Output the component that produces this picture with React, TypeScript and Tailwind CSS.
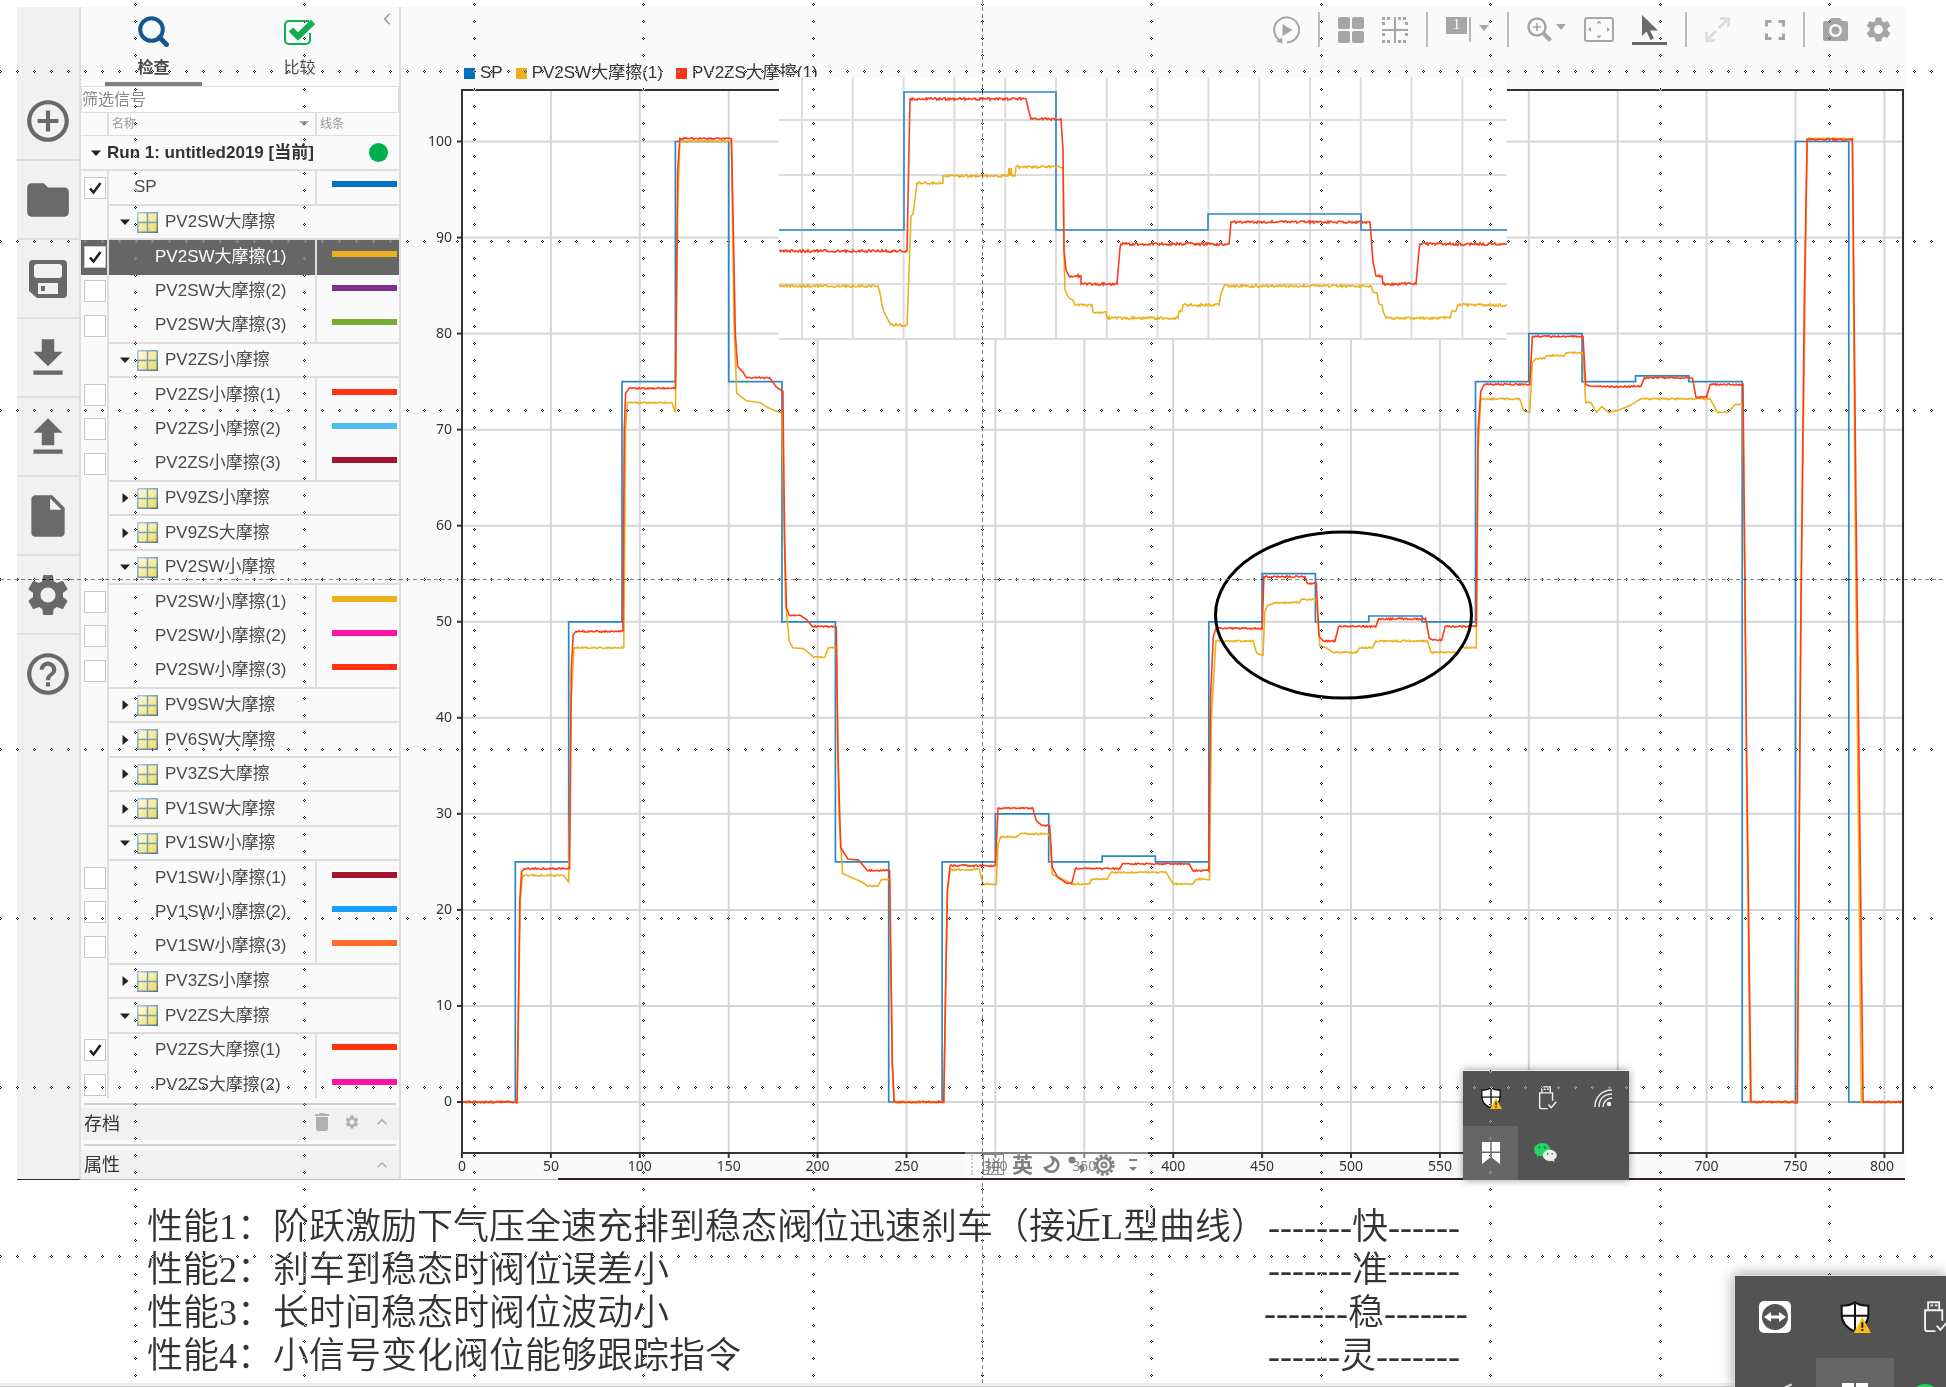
import { useState } from 'react';
import type { ReactNode } from 'react';
import {
  MdAddCircleOutline,
  MdArrowBackIosNew,
  MdFolder,
  MdHelpOutline,
  MdInsertDriveFile,
  MdKeyboardArrowUp,
  MdSettings,
} from 'react-icons/md';

type Row =
  | { kind: 'group'; name: string; open: boolean }
  | { kind: 'signal'; name: string; color: string; on?: boolean; selected?: boolean; last?: boolean; root?: boolean };

const rows: Row[] = [
  { kind: 'signal', name: 'SP', color: '#0072bd', on: true, last: true, root: true },
  { kind: 'group', name: 'PV2SW大摩擦', open: true },
  { kind: 'signal', name: 'PV2SW大摩擦(1)', color: '#edb120', on: true, selected: true },
  { kind: 'signal', name: 'PV2SW大摩擦(2)', color: '#7e2f8e' },
  { kind: 'signal', name: 'PV2SW大摩擦(3)', color: '#77ac30', last: true },
  { kind: 'group', name: 'PV2ZS小摩擦', open: true },
  { kind: 'signal', name: 'PV2ZS小摩擦(1)', color: '#ff3311' },
  { kind: 'signal', name: 'PV2ZS小摩擦(2)', color: '#4dbeee' },
  { kind: 'signal', name: 'PV2ZS小摩擦(3)', color: '#a2142f', last: true },
  { kind: 'group', name: 'PV9ZS小摩擦', open: false },
  { kind: 'group', name: 'PV9ZS大摩擦', open: false },
  { kind: 'group', name: 'PV2SW小摩擦', open: true },
  { kind: 'signal', name: 'PV2SW小摩擦(1)', color: '#edb120' },
  { kind: 'signal', name: 'PV2SW小摩擦(2)', color: '#ff13a6' },
  { kind: 'signal', name: 'PV2SW小摩擦(3)', color: '#ff3311', last: true },
  { kind: 'group', name: 'PV9SW大摩擦', open: false },
  { kind: 'group', name: 'PV6SW大摩擦', open: false },
  { kind: 'group', name: 'PV3ZS大摩擦', open: false },
  { kind: 'group', name: 'PV1SW大摩擦', open: false },
  { kind: 'group', name: 'PV1SW小摩擦', open: true },
  { kind: 'signal', name: 'PV1SW小摩擦(1)', color: '#a2142f' },
  { kind: 'signal', name: 'PV1SW小摩擦(2)', color: '#1a9fff' },
  { kind: 'signal', name: 'PV1SW小摩擦(3)', color: '#ff6929', last: true },
  { kind: 'group', name: 'PV3ZS小摩擦', open: false },
  { kind: 'group', name: 'PV2ZS大摩擦', open: true },
  { kind: 'signal', name: 'PV2ZS大摩擦(1)', color: '#ff3311', on: true },
  { kind: 'signal', name: 'PV2ZS大摩擦(2)', color: '#ff13a6' },
];

type Point = [number, number];

// setpoint and measured positions, [seconds, percent]
const spSteps: Point[] = [
  [0, 0], [30, 25], [60, 50], [90, 75], [120, 100], [150, 75], [180, 50], [210, 25], [240, 0], [270, 25],
  [300, 30], [330, 25], [360, 25.6], [390, 25], [420, 50], [450, 55], [480, 50], [510, 50.6], [540, 50],
  [570, 75], [600, 80], [630, 75], [660, 75.6], [690, 75], [720, 0], [750, 100], [780, 0], [810, 0],
];

const zs: Point[] = [
  [0, 0], [31, 0], [32.5, 21], [33.5, 24], [35, 24.3], [60.5, 24.3], [61.5, 45], [62.5, 48.6], [64, 49], [90.5, 49],
  [91.3, 70], [92, 73.8], [94, 74.3], [120, 74.3], [121.3, 97], [122.5, 100.3], [151.5, 100.3], [152.5, 92],
  [153.7, 80], [155, 76.6], [158, 76], [160, 75.4], [173, 75.4], [177, 74.4], [180.5, 74], [181.5, 58], [182.5, 51.4],
  [184, 50.7], [190, 50.7], [194, 50.2], [197, 49.5], [210.5, 49.5], [211.5, 36], [213, 26.5], [217, 25.3], [223, 25.2],
  [228, 24.1], [240.5, 24.1], [242, 4], [243, 0], [271, 0], [272, 12], [273, 22], [274.5, 24.6], [300, 24.6],
  [301.5, 30.6], [321, 30.6], [323, 29.3], [326, 28.8], [330.5, 28.8], [332, 24.4], [335, 23.4], [340, 22.8],
  [343, 22.8], [345, 24.3], [370, 24.3], [371.5, 24.8], [409, 24.8], [411, 24.1], [420, 24.1], [421, 42], [422.5, 48.4],
  [424, 49.3], [450, 49.3], [451, 54.7], [474, 54.7], [475.5, 54], [480.5, 54], [482, 48.5], [484.5, 48], [491, 48],
  [493, 49.5], [514, 49.5], [515.5, 50.3], [542, 50.3], [544, 48.3], [546, 48.1], [551, 48.1], [553, 49.5],
  [570.5, 49.5], [571.5, 70], [573, 74], [575, 74.7], [600.5, 74.7], [602, 79.7], [630.5, 79.7], [632, 74.7],
  [635, 74.5], [663, 74.5], [665, 75.4], [692, 75.4], [694, 73.4], [700, 73.4], [702, 74.7], [720.5, 74.7],
  [722.5, 36], [725, 0], [751, 0], [753, 50], [755, 84], [756.5, 100.2], [782, 100.2], [784, 62], [788, 0], [810, 0],
];

const sw: Point[] = [
  [0, 0], [31, 0], [32.8, 21], [34, 23.6], [57, 23.6], [60, 22.9], [61.5, 42], [63, 47.3], [91, 47.3], [92, 70],
  [93, 72.8], [118, 72.8], [120, 71.8], [121.3, 93], [122.5, 100], [151.5, 100], [153, 81], [154.5, 73.8],
  [160, 73], [168, 72.8], [172, 72.3], [176, 72], [180, 71.7], [182, 52], [184, 48], [186, 47.3], [192, 47.2],
  [198, 46.3], [204, 46.3], [206, 47.3], [210.5, 47.3], [212, 30], [214, 23.8], [220, 23.3], [225, 22.9],
  [228, 22.5], [234, 22.5], [236, 23.2], [240.5, 23.2], [242, 4], [243, 0], [271, 0], [273, 22], [274.5, 24.2],
  [291, 24.2], [293, 22.7], [300.5, 22.7], [301.5, 26.8], [303, 27.6], [312, 27.6], [314, 27.9], [330.5, 27.9],
  [332, 23.7], [338, 23.2], [343, 22.7], [353, 22.7], [354, 23.2], [363, 23.2], [365, 23.9], [396, 23.9],
  [400, 22.7], [411, 22.7], [413, 23.2], [420.5, 23.2], [421.5, 40], [424, 48], [445, 48], [447, 46.7], [450.5, 46.5],
  [451.5, 51], [453, 51.7], [458, 52], [471, 52], [472, 52.3], [480.5, 52.3], [482.5, 47.5], [486, 47.3],
  [490, 46.8], [503, 46.8], [505, 47.3], [512, 47.3], [514, 48], [543, 48], [545, 46.8], [560, 46.8], [562, 47.3],
  [570.5, 47.3], [571.5, 68], [573, 73.2], [595, 73.2], [597, 72], [600.5, 71.8], [602, 77], [604, 77.4],
  [609, 77.4], [610, 77.7], [620, 77.7], [621, 78], [630.5, 78], [632, 72.8], [635, 72.8], [638, 71.8],
  [641, 72.4], [645, 71.8], [650, 72], [657, 72.5], [663, 73.2], [702, 73.2], [706, 71.8], [712, 71.8], [716, 72.6],
  [720.5, 72.6], [722.5, 34], [724.5, 0], [751, 0], [753, 50], [756.5, 100.3], [782, 100.3], [783.5, 62], [787, 0],
  [810, 0],
];

// magnified view, in drawing units
const zoomSp: Point[] = [
  [779, 230], [904, 230], [904, 92], [1056, 92], [1056, 230], [1208, 230], [1208, 214], [1361, 214], [1361, 230], [1507, 230],
];
const zoomZs: Point[] = [
  [779, 251], [907, 251], [910, 99], [1026, 99], [1029, 112], [1031, 119], [1061, 119], [1063, 150], [1064, 250],
  [1066, 270], [1069, 276], [1081, 276], [1081, 284], [1117, 284], [1120, 248], [1121, 244], [1229, 244], [1231, 222],
  [1370, 222], [1373, 262], [1376, 276], [1382, 276], [1383, 284], [1416, 284], [1419, 250], [1420, 244], [1507, 244],
];
const zoomSw: Point[] = [
  [779, 286], [878, 286], [880, 293], [882, 305], [884, 312], [887, 318], [891, 325], [907, 325], [908, 300],
  [911, 216], [913, 214], [917, 183], [943, 183], [943, 176], [1008, 176], [1009, 168], [1010, 176], [1011, 168],
  [1012, 176], [1015, 176], [1016, 167], [1063, 167], [1064, 250], [1065, 290], [1069, 298], [1073, 300], [1075, 305],
  [1092, 305], [1093, 312], [1106, 312], [1107, 318], [1178, 318], [1179, 311], [1182, 311], [1183, 305], [1219, 305],
  [1221, 294], [1224, 286], [1371, 286], [1373, 292], [1377, 293], [1379, 304], [1382, 305], [1383, 311], [1386, 318],
  [1450, 318], [1452, 311], [1456, 311], [1458, 305], [1507, 305],
];

const sx = (t: number) => 462 + t * 1.778;
const sy = (v: number) => 1101 - v * 9.605;

// adds sensor ripple to the flat stretches
function trace(points: Point[], ripple: number) {
  let seed = 7;
  const out = [`M${points[0][0]} ${points[0][1]}`];
  for (let i = 1; i < points.length; i++) {
    const [x0, y0] = points[i - 1];
    const [x1, y1] = points[i];
    if (ripple > 0 && Math.abs(y1 - y0) < 0.01) {
      for (let x = x0 + 1; x < x1; x += 1) {
        seed = (seed * 16807) % 2147483647;
        out.push(`L${x.toFixed(1)} ${(y0 + ((seed % 200) / 100 - 1) * ripple).toFixed(1)}`);
      }
    }
    out.push(`L${x1.toFixed(1)} ${y1.toFixed(1)}`);
  }
  return out.join('');
}

const scale = (points: Point[]): Point[] => points.map(([t, v]) => [sx(t), sy(v)]);

const spPath = spSteps
  .map(([t, v], i) => (i === 0 ? `M${sx(t)} ${sy(v)}` : `H${sx(t).toFixed(1)}V${sy(v).toFixed(1)}`))
  .join('');

const range = (n: number) => Array.from({ length: n }, (_, i) => i);

function Chart() {
  return (
    <svg viewBox="401 88 1504 1091" className="block w-full font-['Noto_Sans',sans-serif] text-sm" fill="none">
      <rect x="462" y="89" width="1441" height="1063" fill="#fff" />
      <g stroke="#d6d6d6" strokeWidth="2">
        {range(16).map((i) => (
          <path key={i} d={`M${sx((i + 1) * 50)} 90V1152`} />
        ))}
        {range(11).map((i) => (
          <path key={i} d={`M462 ${sy(i * 10)}H1903`} />
        ))}
      </g>
      <path d={spPath} stroke="#2a87c8" strokeWidth="1.700" />
      <path d={trace(scale(sw), 0.8)} stroke="#edb120" strokeWidth="1.600" />
      <path d={trace(scale(zs), 0.8)} stroke="#ff3c14" strokeWidth="1.600" />
      <rect x="462" y="89" width="1441" height="1063" stroke="#333" strokeWidth="2" />
      <g stroke="#333" strokeWidth="2">
        {range(17).map((i) => (
          <path key={i} d={`M${sx(i * 50)} 1152v5`} />
        ))}
        {range(11).map((i) => (
          <path key={i} d={`M457 ${sy(i * 10)}h5`} />
        ))}
      </g>
      <g fill="#333">
        {range(17).map((i) => (
          <text key={i} x={i === 16 ? 1882 : sx(i * 50)} y="1170" textAnchor="middle">
            {i * 50}
          </text>
        ))}
        {range(11).map((i) => (
          <text key={i} x="452" y={sy(i * 10) + 4} textAnchor="end">
            {i * 10}
          </text>
        ))}
      </g>
      <ellipse cx="1343.500" cy="614" rx="128" ry="83" stroke="#000" strokeWidth="3" />
      <path d="M401 1178.500H558" stroke="#bbb" />
      <path d="M558 1178H1905" stroke="#3a2020" strokeWidth="2" />
    </svg>
  );
}

function ZoomedChart() {
  return (
    <svg viewBox="779 77 728 263" className="block w-full" fill="none">
      <rect x="779" y="77" width="728" height="263" fill="#fff" />
      <g stroke="#dcdcdc" strokeWidth="2">
        {range(14).map((i) => (
          <path key={i} d={`M${802 + i * 50.8} 77V340`} />
        ))}
        {[120, 175, 230, 284, 339].map((y) => (
          <path key={y} d={`M779 ${y}H1507`} />
        ))}
      </g>
      <path d={trace(zoomSp, 0)} stroke="#2a87c8" strokeWidth="1.600" />
      <path d={trace(zoomSw, 1.3)} stroke="#edb120" strokeWidth="1.600" />
      <path d={trace(zoomZs, 1.3)} stroke="#f4401c" strokeWidth="1.600" />
    </svg>
  );
}

// alignment guides laid over the whole sheet
function Guides() {
  const dots: string[] = [];
  const dot = (x: number, y: number) => {
    const px = Math.round(x);
    const py = Math.round(y);
    dots.push(`M${px} ${py - 1}h1v1h-1zM${px} ${py + 1}h1v1h-1zM${px - 1} ${py}h1v1h-1zM${px + 1} ${py}h1v1h-1z`);
  };
  const rowsY = [71, 241, 410, 579, 749, 918, 1087, 1256];
  const colsX = range(11).map((i) => 135 + i * 169.4);
  rowsY.forEach((y) => range(115).forEach((i) => dot(i * 16.94, y)));
  colsX.forEach((x) =>
    range(82).forEach((i) => {
      const y = 4 + i * 16.93;
      if (!rowsY.some((r) => Math.abs(r - y) < 3)) dot(x, y);
    }),
  );
  return (
    <svg className="pointer-events-none absolute inset-0 h-full w-full mix-blend-difference" fill="#fff">
      <path d={dots.join('')} shapeRendering="crispEdges" />
      <path d="M982.500 0V1383M0 579.500H1946" stroke="#777" strokeDasharray="4 3" />
    </svg>
  );
}

function SaveIcon() {
  return (
    <svg viewBox="0 0 38 38" className="size-[38px]">
      <path
        fill="currentColor"
        fillRule="evenodd"
        d="M4 0h30a4 4 0 0 1 4 4v30a4 4 0 0 1-4 4H8l-8-7V4a4 4 0 0 1 4-4zm4 4a3 3 0 0 0-3 3v8a3 3 0 0 0 3 3h22a3 3 0 0 0 3-3V7a3 3 0 0 0-3-3zm1 19v11h20V23zm3 3h4v5h-4z"
      />
    </svg>
  );
}

function ImportIcon() {
  return (
    <svg viewBox="0 0 24 24" className="size-[50px]" fill="currentColor">
      <path d="M19 9h-4V3H9v6H5l7 7 7-7zM5 18v2h14v-2H5z" />
    </svg>
  );
}

function ExportIcon() {
  return (
    <svg viewBox="0 0 24 24" className="size-[50px]" fill="currentColor">
      <path d="M9 16h6v-6h4l-7-7-7 7h4zm-4 2h14v2H5z" />
    </svg>
  );
}

const railItems: { label: string; icon: ReactNode }[] = [
  { label: '新建', icon: <MdAddCircleOutline className="size-[50px]" /> },
  { label: '打开', icon: <MdFolder className="size-[50px]" /> },
  { label: '保存', icon: <SaveIcon /> },
  { label: '导入', icon: <ImportIcon /> },
  { label: '导出', icon: <ExportIcon /> },
  { label: '报告', icon: <MdInsertDriveFile className="size-[50px]" /> },
  { label: '预设', icon: <MdSettings className="size-[50px]" /> },
  { label: '帮助', icon: <MdHelpOutline className="size-[50px]" /> },
];

function Rail() {
  return (
    <nav className="w-16 shrink-0 border-r-2 border-b border-r-[#dedede] border-b-[#3a2020] bg-[#f1f1f1] pt-[75px] text-[#696969]">
      <div className="flex h-[630px] flex-col">
        {railItems.map((item) => (
          <button
            key={item.label}
            aria-label={item.label}
            className="flex flex-1 items-center justify-center border-b-2 border-[#dedede] last:border-b-0"
          >
            {item.icon}
          </button>
        ))}
      </div>
    </nav>
  );
}

function GroupIcon() {
  return (
    <svg viewBox="0 0 21 21" className="size-[21px]">
      <defs>
        <linearGradient id="pane" x1="0" y1="0" x2="1" y2="1">
          <stop offset="0" stopColor="#fdfce0" />
          <stop offset="1" stopColor="#ecdc62" />
        </linearGradient>
        <linearGradient id="frame" x1="0" y1="0" x2="1" y2="1">
          <stop offset="0" stopColor="#a9cdea" />
          <stop offset="1" stopColor="#4f6f86" />
        </linearGradient>
      </defs>
      <rect width="21" height="21" fill="url(#frame)" />
      <rect x="1.500" y="1.500" width="18" height="18" fill="url(#pane)" />
      <path d="M10.500 1v19M1 10.500h19" stroke="#7f9fae" strokeWidth="1.500" />
    </svg>
  );
}

function Caret({ open }: { open: boolean }) {
  return (
    <svg viewBox="0 0 10 10" className="size-[10px]" fill="#222">
      {open ? <path d="M0 2.500h10L5 8z" /> : <path d="M2.500 0L8.500 5l-6 5z" />}
    </svg>
  );
}

function SignalRow({ row, index }: { row: Row; index: number }) {
  const height = index % 2 ? 'h-[34px]' : 'h-[35px]';
  if (row.kind === 'group') {
    return (
      <tr className={height}>
        <td className="border-r-2 border-[#dedede]" />
        <td colSpan={2} className="border-b-2 border-[#dedede]">
          <div className="flex items-center pl-[11px]">
            <button aria-label={row.name} className="mr-[7px]">
              <Caret open={row.open} />
            </button>
            <GroupIcon />
            <span className="pl-[7px]">{row.name}</span>
          </div>
        </td>
      </tr>
    );
  }
  const id = `signal-${index}`;
  return (
    <tr className={`${height} ${row.selected ? 'bg-[#666] text-white' : ''}`}>
      <td className="border-r-2 border-[#dedede] pb-[2px]">
        <div className="relative ml-[3px] size-[22px]">
          <input
            id={id}
            type="checkbox"
            defaultChecked={row.on}
            className="peer block size-[22px] appearance-none border border-[#c8c8c8] bg-white"
          />
          <svg
            viewBox="0 0 22 22"
            className="pointer-events-none absolute inset-0 hidden peer-checked:block"
            fill="none"
            stroke="#222"
          >
            <path d="M6 11.500l3.500 4L16.500 6" strokeWidth="2.600" />
          </svg>
        </div>
      </td>
      <td className={`border-r-2 border-[#dedede] pb-[2px] ${row.last ? 'border-b-2' : ''}`}>
        <label htmlFor={id} className={row.root ? 'pl-[25px]' : 'pl-[46px]'}>
          {row.name}
        </label>
      </td>
      <td className={`border-[#dedede] ${row.last ? 'border-b-2' : ''}`}>
        <div className="mb-[8px] ml-[15px] h-[6px] w-[65px]" style={{ background: row.color }} />
      </td>
    </tr>
  );
}

function Sidebar() {
  const [tab, setTab] = useState('inspect');
  return (
    <aside className="flex w-[320px] shrink-0 flex-col border-r-2 border-b border-r-[#dedede] border-b-[#bbb] bg-[#fafafa] text-[17px] text-[#4a4a4a]">
      <div className="relative flex h-[79px] pl-[24px] text-base">
        <button
          onClick={() => setTab('inspect')}
          className={`flex w-[97px] flex-col items-center border-b-4 pt-[9px] ${tab === 'inspect' ? 'border-[#808080] font-bold' : 'border-transparent'}`}
        >
          <svg viewBox="0 0 31 31" className="size-[31px]" fill="none" stroke="#14588f">
            <circle cx="13.500" cy="13.500" r="11.300" strokeWidth="4" />
            <path d="M21.500 21.500l7 7" strokeWidth="5" strokeLinecap="round" />
          </svg>
          <span className="pt-[9px]">检查</span>
        </button>
        <button
          onClick={() => setTab('compare')}
          className={`ml-[49px] flex w-[97px] flex-col items-center border-b-4 pt-[9px] ${tab === 'compare' ? 'border-[#808080] font-bold' : 'border-transparent'}`}
        >
          <svg viewBox="0 0 31 31" className="size-[31px]" fill="none" stroke="#0bb14f">
            <path d="M25 5H5a4 4 0 0 0-4 4v15a4 4 0 0 0 4 4h17a4 4 0 0 0 4-4v-7" strokeWidth="2" />
            <path d="M7 13.500l7 7L29 6" strokeWidth="6" />
          </svg>
          <span className="pt-[9px]">比较</span>
        </button>
        <button aria-label="收起" className="absolute top-[5px] right-[5px] text-[#999]">
          <MdArrowBackIosNew className="size-[14px]" />
        </button>
      </div>
      <input
        aria-label="筛选信号"
        placeholder="筛选信号"
        className="h-[27px] border border-[#dedede] bg-white text-base placeholder:text-[#888]"
      />
      <div className="h-[985px] overflow-hidden">
        <table className="w-full table-fixed border-separate border-spacing-0 text-left leading-5">
          <colgroup>
            <col className="w-[28px]" />
            <col className="w-[208px]" />
            <col />
          </colgroup>
          <thead className="text-xs text-[#999]">
            <tr className="h-[23px]">
              <th className="border-r-2 border-b border-[#dedede]" />
              <th className="border-r-2 border-b border-[#dedede] pr-[6px] pl-[3px] font-normal">
                <span className="flex items-center justify-between">
                  名称
                  <svg viewBox="0 0 10 10" className="size-[10px]" fill="#aaa">
                    <path d="M0 2h10L5 7z" />
                  </svg>
                </span>
              </th>
              <th className="border-b border-[#dedede] pl-[3px] font-normal">线条</th>
            </tr>
          </thead>
          <tbody>
            <tr className="h-[35px]">
              <th colSpan={3} className="border-b-2 border-[#dedede]">
                <div className="flex items-center pl-[10px]">
                  <Caret open />
                  <span className="pl-[6px] text-[#333]">Run 1: untitled2019 [当前]</span>
                  <span className="mr-[11px] ml-auto size-[19px] rounded-full bg-[#00b04f]" />
                </div>
              </th>
            </tr>
            {rows.map((row, i) => (
              <SignalRow key={row.name} row={row} index={i} />
            ))}
          </tbody>
        </table>
      </div>
      <div className="mx-[3px] mt-[5px] border-t-2 border-[#cfcfcf]" />
      <div className="mt-[3px] flex h-[32px] items-center bg-[#f1f1f1] pr-[7px] pl-[3px] text-lg text-[#333]">
        存档
        <div className="ml-auto flex items-center gap-[12px] pb-[4px] text-[#b0b0b0]">
          <button aria-label="删除">
            <svg viewBox="0 0 14 18" className="h-[18px] w-[14px]" fill="currentColor">
              <path d="M0 1h4l1-1h4l1 1h4v2H0zM1 4h12v12a2 2 0 0 1-2 2H3a2 2 0 0 1-2-2z" />
            </svg>
          </button>
          <button aria-label="存档设置" className="ml-[3px]">
            <MdSettings className="size-4" />
          </button>
          <button aria-label="展开存档">
            <MdKeyboardArrowUp className="size-[20px]" />
          </button>
        </div>
      </div>
      <div className="mx-[3px] mt-[4px] border-t-2 border-[#cfcfcf]" />
      <div className="mt-[4px] flex flex-1 items-center justify-between bg-[#f1f1f1] pr-[7px] pl-[3px] text-lg text-[#333]">
        属性
        <button aria-label="展开属性" className="text-[#b0b0b0]">
          <MdKeyboardArrowUp className="size-[20px]" />
        </button>
      </div>
    </aside>
  );
}

function Separator() {
  return <div className="h-[35px] w-[2px] bg-[#bbb]" />;
}

function Toolbar() {
  return (
    <div className="flex h-[46px] items-center justify-end gap-[18px] pr-[14px] pb-[1px] text-[#a6a6a6]">
      <button aria-label="播放">
        <svg viewBox="0 0 28 28" className="size-[28px]" fill="none" stroke="currentColor" strokeWidth="2">
          <path d="M8 24.500A12.500 12.500 0 1 1 15 26.400" />
          <path d="M10.500 8v12l10-6zM4 25.500l6.500 2-.5-6z" fill="currentColor" stroke="none" />
        </svg>
      </button>
      <Separator />
      <button aria-label="布局">
        <svg viewBox="0 0 26 26" className="size-[26px]" fill="currentColor">
          <rect width="12" height="12" rx="2" />
          <rect x="14" width="12" height="12" rx="2" />
          <rect y="14" width="12" height="12" rx="2" />
          <rect x="14" y="14" width="12" height="12" rx="2" />
        </svg>
      </button>
      <button aria-label="网格">
        <svg viewBox="0 0 26 26" className="size-[26px]" fill="none" stroke="currentColor">
          <path d="M13 0v26M0 13h26" strokeWidth="2" />
          <path d="M0 1.500h10M16 1.500h10M0 24.500h10M16 24.500h10" strokeWidth="3" strokeDasharray="3 2" />
          <path d="M1.500 5v5M1.500 16v5M24.500 5v5M24.500 16v5" strokeWidth="3" strokeDasharray="3 2" />
        </svg>
      </button>
      <Separator />
      <button aria-label="子图" className="flex h-[26px] items-start gap-[8px]">
        <span className="flex">
          <span className="flex h-[17px] w-[21px] items-center justify-center bg-[#a6a6a6] font-['Liberation_Serif',serif] text-sm text-white">
            1
          </span>
          <span className="ml-[2px] h-[25px] w-[2px] bg-[#b4b4b4]" />
        </span>
        <svg viewBox="0 0 10 10" className="mt-[6px] size-[10px]" fill="currentColor">
          <path d="M0 2h10L5 8z" />
        </svg>
      </button>
      <Separator />
      <button aria-label="缩放" className="flex items-center gap-1">
        <svg viewBox="0 0 25 25" className="size-[25px]" fill="none" stroke="currentColor">
          <circle cx="10" cy="10" r="8.500" strokeWidth="2.500" />
          <path d="M16 16l7.500 7.500" strokeWidth="4" />
          <path d="M10 6v8M6 10h8" strokeWidth="1.600" />
        </svg>
        <svg viewBox="0 0 10 10" className="mb-[5px] size-[10px]" fill="currentColor">
          <path d="M0 2h10L5 8z" />
        </svg>
      </button>
      <button aria-label="适应视图">
        <svg viewBox="0 0 30 25" className="h-[25px] w-[30px]" fill="none" stroke="currentColor" strokeWidth="2">
          <rect x="1" y="1" width="28" height="23" rx="2" />
          <path d="M15 3.500l2.500 3h-5zM15 21.500l2.500-3h-5zM4 12.500l3-2.500v5zM26 12.500l-3-2.500v5z" fill="currentColor" stroke="none" />
        </svg>
      </button>
      <button aria-label="选择" className="flex w-[35px] flex-col items-center border-b-[3px] border-[#6a6a6a] pb-[2px]">
        <svg viewBox="0 0 16 25" className="h-[25px] w-[16px]" fill="#6a6a6a">
          <path d="M0 0v21l4.500-4.500L8.500 25l3.500-1.500-4-8H16z" />
        </svg>
      </button>
      <Separator />
      <button aria-label="展开" className="mr-[17px] text-[#dedede]">
        <svg viewBox="0 0 25 25" className="size-[25px]" fill="none" stroke="currentColor" strokeWidth="3">
          <path d="M15 1.500h8.500V10M23 2l-9 9M1.500 15v8.500H10M2 23l9-9" />
        </svg>
      </button>
      <button aria-label="全屏">
        <svg viewBox="0 0 20 20" className="size-[20px]" fill="none" stroke="currentColor" strokeWidth="3">
          <path d="M1.500 6.500v-5h5M13.500 1.500h5v5M18.500 13.500v5h-5M6.500 18.500h-5v-5" />
        </svg>
      </button>
      <Separator />
      <button aria-label="截图">
        <svg viewBox="0 0 25 23" className="h-[23px] w-[25px]" fill="currentColor">
          <path
            fillRule="evenodd"
            d="M8 0h9l2 3h4a2 2 0 0 1 2 2v16a2 2 0 0 1-2 2H2a2 2 0 0 1-2-2V5a2 2 0 0 1 2-2h4zm4.500 6a6.500 6.500 0 1 0 0 13 6.500 6.500 0 0 0 0-13zm0 2.500a4 4 0 1 1 0 8 4 4 0 0 1 0-8z"
          />
        </svg>
      </button>
      <button aria-label="设置">
        <svg viewBox="2 2 20 20" className="size-[25px]" fill="currentColor">
          <path d="M19.140 12.940c.04-.3.06-.61.06-.94 0-.32-.02-.64-.07-.94l2.030-1.580c.18-.14.23-.41.12-.61l-1.920-3.320c-.12-.22-.37-.29-.59-.22l-2.390.96c-.5-.38-1.030-.7-1.620-.94l-.36-2.540c-.04-.24-.24-.41-.48-.41h-3.840c-.24 0-.43.17-.47.41l-.36 2.540c-.59.24-1.130.57-1.620.94l-2.390-.96c-.22-.08-.47 0-.59.22L2.740 8.870c-.12.21-.08.47.12.61l2.030 1.580c-.05.3-.09.63-.09.94s.02.64.07.94l-2.030 1.580c-.18.14-.23.41-.12.61l1.920 3.320c.12.22.37.29.59.22l2.390-.96c.5.38 1.030.7 1.620.94l.36 2.540c.05.24.24.41.48.41h3.840c.24 0 .44-.17.47-.41l.36-2.540c.59-.24 1.130-.56 1.620-.94l2.390.96c.22.08.47 0 .59-.22l1.920-3.320c.12-.22.07-.47-.12-.61l-2.010-1.580zM12 15.600c-1.980 0-3.600-1.620-3.600-3.600s1.620-3.600 3.600-3.600 3.600 1.620 3.600 3.600-1.620 3.600-3.600 3.600z" />
        </svg>
      </button>
    </div>
  );
}

function ShieldIcon({ className }: { className: string }) {
  return (
    <svg viewBox="0 0 24 24" className={className}>
      <path d="M12 1c3 2 6 2.500 10 2.500V10c0 6-4 10.500-10 13C6 20.500 2 16 2 10V3.500C6 3.500 9 3 12 1z" fill="#fff" stroke="#111" strokeWidth="1.500" />
      <path d="M12 2v20M2 11h20" stroke="#111" strokeWidth="1.500" />
      <path d="M17.500 12L24 24H11z" fill="#fbbd14" />
      <path d="M17.500 16v4M17.500 21v1.500" stroke="#222" strokeWidth="1.500" />
    </svg>
  );
}

function UsbIcon({ className }: { className: string }) {
  return (
    <svg viewBox="0 0 20 26" className={className} fill="none" stroke="#f2f2f2" strokeWidth="1.500">
      <path d="M4 7V1h9v6M6 3.500h2M9.500 3.500h2" />
      <path d="M10 24.500H3.500a2 2 0 0 1-2-2V7.500h14V16M11 20l3 3.500 5.500-6.500" />
    </svg>
  );
}

function RibbonIcon({ className }: { className: string }) {
  return (
    <svg viewBox="0 0 18 22" className={className} fill="#fff">
      <path d="M0 0h8.300v9.500H0zM9.700 0H18v9.500H9.700zM0 11h8.300v4.500L0 22zM9.700 11H18v11l-8.300-6.500z" />
    </svg>
  );
}

function WeChatIcon({ className }: { className: string }) {
  return (
    <svg viewBox="0 0 24 20" className={className}>
      <path d="M8.500 0C4 0 0 3 0 7c0 2.300 1.200 4.200 3.200 5.500L2.500 15l3-1.500c1 .3 2 .5 3 .5 4.700 0 8.500-3 8.500-7s-3.800-7-8.500-7z" fill="#1fd663" />
      <path d="M16.500 7c-4 0-7.200 2.600-7.200 6s3.200 6 7.200 6c.9 0 1.700-.1 2.500-.4l2.500 1.400-.6-2.400c1.800-1.100 3-2.700 3-4.600 0-3.400-3.400-6-7.400-6z" fill="#eee" />
      <path d="M5.700 3.800a1 1 0 1 0 .01 0M11.300 3.800a1 1 0 1 0 .01 0M14.200 10.500a.8.8 0 1 0 .01 0M19 10.500a.8.8 0 1 0 .01 0" fill="#176b3b" />
    </svg>
  );
}

function TrayPopup() {
  return (
    <div className="absolute right-[276px] bottom-0 grid h-[110px] w-[166px] grid-cols-3 grid-rows-2 border-t border-[#eee] bg-[#535353] shadow-[0_0_8px_rgba(0,0,0,0.4)]">
      <div className="grid place-items-center">
        <ShieldIcon className="size-[22px]" />
      </div>
      <div className="grid place-items-center pl-[3px]">
        <UsbIcon className="h-[24px] w-[19px]" />
      </div>
      <div className="grid place-items-center pl-[3px]">
        <svg viewBox="0 0 18 18" className="size-[18px]" fill="none" stroke="#e8e8e8" strokeWidth="1.500">
          <path d="M1 18C1 8 8 1 18 1M5 18C5 10 10 5 18 5M9 18c0-5 4-9 9-9" />
          <circle cx="15" cy="15" r="1.500" fill="#fff" />
        </svg>
      </div>
      <div className="grid place-items-center bg-[#666]">
        <RibbonIcon className="h-[22px] w-[18px]" />
      </div>
      <div className="grid place-items-center">
        <WeChatIcon className="h-[19px] w-[23px]" />
      </div>
    </div>
  );
}

function CornerPopup() {
  return (
    <div className="absolute right-0 bottom-0 flex h-[112px] w-[212px] flex-col overflow-hidden border-t border-l border-[#ddd] bg-[#535353] shadow-[0_0_14px_rgba(0,0,0,0.4)]">
      <div className="flex h-[82px] shrink-0 items-center">
        <div className="grid w-[80px] shrink-0 place-items-center">
          <svg viewBox="0 0 32 32" className="size-[32px]">
            <rect width="32" height="32" rx="5" fill="#fff" />
            <circle cx="16" cy="16" r="13" fill="#535353" />
            <path d="M5 16l7-5v3.500h8V11l7 5-7 5v-3.500h-8V21z" fill="#fff" />
          </svg>
        </div>
        <div className="grid w-[80px] shrink-0 place-items-center">
          <ShieldIcon className="size-[32px]" />
        </div>
        <div className="grid w-[80px] shrink-0 place-items-center">
          <UsbIcon className="h-[32px] w-[25px]" />
        </div>
      </div>
      <div className="flex h-[82px] shrink-0">
        <div className="flex w-[81px] shrink-0 items-start justify-center pt-[27px] pl-6">
          <div className="h-[2px] w-[8px] rotate-[-25deg] bg-[#ddd]" />
        </div>
        <div className="flex w-[78px] shrink-0 justify-center bg-[#666] pt-[25px]">
          <RibbonIcon className="h-[32px] w-[26px] shrink-0" />
        </div>
        <div className="flex w-[72px] shrink-0 justify-center pt-[26px]">
          <WeChatIcon className="h-[28px] w-[34px] shrink-0" />
        </div>
      </div>
    </div>
  );
}

function ImeBar() {
  return (
    <div className="absolute bottom-[2px] left-[564px] flex h-[27px] w-[183px] items-center bg-white/40 pl-[6px] text-[#808080]">
      <span className="h-[20px] border-l-2 border-dotted border-[#ccc]" />
      <span className="ml-[10px] grid size-[21px] place-items-center border border-[#888] text-base">拼</span>
      <span className="ml-[8px] text-[21px] leading-6 font-bold">英</span>
      <svg viewBox="0 0 18 18" className="ml-[9px] size-[18px]" fill="none" stroke="currentColor" strokeWidth="2.500">
        <path d="M10 1.500c3 4 1 8-7 10.500 3 5 10 5 12.500 0 2-4 0-9-5.500-10.500z" />
      </svg>
      <svg viewBox="0 0 18 18" className="ml-[8px] size-[18px]" fill="currentColor">
        <circle cx="4" cy="4" r="3.500" />
        <path d="M12 9a3 3 0 0 1 4 4c0 2-2 4-4 4l1-3a3 3 0 0 1-1-5z" />
      </svg>
      <svg viewBox="0 0 22 22" className="ml-[7px] size-[22px]" fill="none" stroke="currentColor">
        <circle cx="11" cy="11" r="9.500" strokeWidth="2.500" strokeDasharray="3 2" />
        <circle cx="11" cy="11" r="7" strokeWidth="2.500" />
        <circle cx="11" cy="11" r="2.500" strokeWidth="2" />
      </svg>
      <svg viewBox="0 0 8 16" className="ml-[14px] h-4 w-2" fill="currentColor">
        <path d="M0 2h8v2H0zM0 10h8l-4 4z" />
      </svg>
    </div>
  );
}

const legend = [
  { name: 'SP', swatch: 'bg-[#0072bd]' },
  { name: 'PV2SW大摩擦(1)', swatch: 'bg-[#edb120]' },
  { name: 'PV2ZS大摩擦(1)', swatch: 'bg-[#ff3311]' },
];

function PlotPanel() {
  return (
    <main className="relative min-w-0 flex-1 bg-[#fafafa]">
      <Toolbar />
      <div className="flex h-[36px] items-center gap-[13px] pt-[4px] pl-[63px] text-[17px] text-[#333]">
        {legend.map((item) => (
          <div key={item.name} className="flex items-center gap-[5px]">
            <span className={`h-[11px] w-[11px] ${item.swatch}`} />
            {item.name}
          </div>
        ))}
      </div>
      <Chart />
      <div className="absolute top-[70px] left-[378px] w-[728px]">
        <ZoomedChart />
      </div>
      <ImeBar />
      <TrayPopup />
    </main>
  );
}

const notes = [
  ['性能1：阶跃激励下气压全速充排到稳态阀位迅速刹车（接近L型曲线）', '-------快------'],
  ['性能2：刹车到稳态时阀位误差小', '-------准------'],
  ['性能3：长时间稳态时阀位波动小', '-------稳-------'],
  ['性能4：小信号变化阀位能够跟踪指令', '------灵-------'],
];

export default function App() {
  return (
    <div className="relative isolate overflow-hidden bg-white font-['Liberation_Sans','Noto_Sans_CJK_SC',sans-serif] text-base">
      <div className="flex pt-[7px] pr-[41px] pl-[17px]">
        <Rail />
        <Sidebar />
        <PlotPanel />
      </div>
      <section className="pt-[26px] pb-[5px] pl-[147px] font-['Liberation_Serif','Noto_Sans_CJK_SC',serif] text-4xl font-[350] text-[#333]">
        {notes.map(([text, mark]) => (
          <div key={text} className="flex leading-[43px]">
            <p className="w-[1117px] shrink-0 whitespace-nowrap">{text}</p>
            <p className="w-[200px] text-center whitespace-nowrap">{mark}</p>
          </div>
        ))}
      </section>
      <div className="h-1 border-b border-[#ccc] bg-[#eee]" />
      <Guides />
      <CornerPopup />
    </div>
  );
}
